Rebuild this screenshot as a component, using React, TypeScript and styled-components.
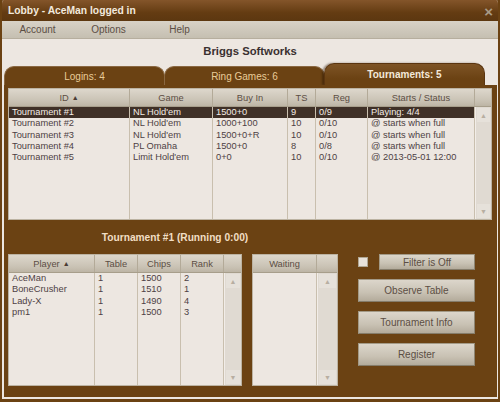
import React from 'react';
import styled, { createGlobalStyle } from 'styled-components';

const BROWN = '#6b4213';
const LIGHT = '#ede7e1';
const TEXT = '#4e3f44';
const HEAD_TEXT = '#5c4e44';

const GlobalStyle = createGlobalStyle`
    html, body {
        margin: 0;
        padding: 0;
        background: ${ BROWN };
    }
    * {
        box-sizing: border-box;
    }
`;

const Window = styled.div`
    width: 500px;
    height: 402px;
    display: flex;
    flex-direction: column;
    background: ${ LIGHT };
    border: solid ${ BROWN };
    border-width: 0 2px 3px 2px;
    border-radius: 4px 4px 0 0;
    font-family: 'Liberation Sans', Arial, sans-serif;
    overflow: hidden;
`;

const TitleBar = styled.div`
    height: 21px;
    margin: 0 -2px;
    padding: 0 8px;
    display: flex;
    align-items: center;
    justify-content: space-between;
    background: linear-gradient(#84552a, #643c12 60%, #5c3710);
    color: #f2e9dd;
    font-weight: bold;
    font-size: 10.3px;
`;

const Close = styled.span`
    color: #a99a86;
    font-size: 15px;
    font-weight: bold;
    line-height: 1;
    margin-right: -1px;
    margin-top: 1px;
`;

const MenuBar = styled.div`
    height: 18px;
    display: flex;
    align-items: center;
    background: linear-gradient(#d8d2c7, #c5bfb1);
    border-bottom: 1px solid #b6ae9e;
`;

const MenuItem = styled.div`
    width: 71px;
    text-align: center;
    font-size: 10px;
    color: ${ HEAD_TEXT };
`;

const Company = styled.div`
    height: 24px;
    display: flex;
    align-items: center;
    justify-content: center;
    font-weight: bold;
    font-size: 11.3px;
    color: #3a3030;
`;

const Body = styled.div`
    flex: 1;
    display: flex;
    flex-direction: column;
    padding: 0 1px 2px 2px;
`;

const TabRow = styled.div`
    height: 22px;
    display: flex;
    align-items: flex-end;
`;

const Tab = styled.div<{ $active?: boolean }>`
    width: 161px;
    height: ${ p => p.$active ? 22 : 19 }px;
    margin-right: -1px;
    display: flex;
    align-items: center;
    justify-content: center;
    border-radius: 10px 10px 0 0;
    border: 1px solid ${ p => p.$active ? '#5a3510' : '#8a6842' };
    border-bottom: none;
    background: ${ p => p.$active
        ? 'linear-gradient(#7e5426, #6b4213 70%)'
        : BROWN };
    box-shadow: ${ p => p.$active ? '-2px 0 2px rgba(40, 20, 0, 0.45)' : 'none' };
    color: ${ p => p.$active ? '#f4e9da' : '#e9cc98' };
    font-weight: ${ p => p.$active ? 'bold' : 'normal' };
    font-size: 10px;
    position: relative;
    z-index: ${ p => p.$active ? 2 : 1 };
`;

const Panel = styled.div`
    flex: 1;
    background: ${ BROWN };
    padding: 3px 5px 11px 4px;
    display: flex;
    flex-direction: column;
    position: relative;
    z-index: 3;
`;

const TableFrame = styled.div<{ $width?: number }>`
    height: 132px;
    width: ${ p => p.$width ? `${ p.$width }px` : 'auto' };
    display: flex;
    flex-direction: column;
    border: 1px solid #bcb3a2;
    background: ${ LIGHT };
    font-size: 9.3px;
`;

const HeadRow = styled.div`
    height: 18px;
    display: flex;
    background: linear-gradient(#ddd7cc, #c9c2b4 70%, #bdb5a5);
    border-bottom: 1px solid #a79e8b;
`;

const HeadCell = styled.div<{ $w?: number }>`
    width: ${ p => p.$w ? `${ p.$w }px` : 'auto' };
    flex: ${ p => p.$w ? 'none' : 1 };
    display: flex;
    align-items: center;
    justify-content: center;
    border-right: 1px solid #b3aa98;
    color: ${ HEAD_TEXT };
    white-space: nowrap;

    &:last-child {
        border-right: none;
    }
`;

const Arrow = styled.span`
    font-size: 7px;
    margin-left: 3px;
    color: #4a3c34;
`;

const BodyRow = styled.div`
    flex: 1;
    display: flex;
`;

const Column = styled.div<{ $w?: number }>`
    width: ${ p => p.$w ? `${ p.$w }px` : 'auto' };
    flex: ${ p => p.$w ? 'none' : 1 };
    border-right: 1px solid #c9bfae;
    overflow: hidden;
`;

const Cell = styled.div<{ $selected?: boolean }>`
    height: 11.3px;
    line-height: 11.3px;
    padding-left: 3px;
    white-space: nowrap;
    color: ${ p => p.$selected ? '#f4ede6' : TEXT };
    background: ${ p => p.$selected ? '#3f3027' : 'transparent' };
`;

const ScrollTrack = styled.div<{ $w: number }>`
    width: ${ p => p.$w }px;
    display: flex;
    flex-direction: column;
    justify-content: space-between;
    background: #e0dad2;
    border-left: 1px solid #f2ede8;
    padding: 1px;
`;

const ScrollButton = styled.div`
    height: 14px;
    display: flex;
    align-items: center;
    justify-content: center;
    background: #e6e1da;
    color: #b8aea1;
    font-size: 7px;
`;

const Caption = styled.div`
    height: 34px;
    width: 334px;
    display: flex;
    align-items: center;
    justify-content: center;
    color: #f1dec4;
    font-weight: bold;
    font-size: 10.2px;
`;

const LowerRow = styled.div`
    display: flex;
    align-items: flex-start;
    gap: 10px;
`;

const Controls = styled.div`
    width: 117px;
    margin-left: 10px;
    display: flex;
    flex-direction: column;
    gap: 9px;
`;

const FilterRow = styled.div`
    display: flex;
    align-items: center;
    justify-content: space-between;
`;

const CheckBox = styled.div`
    width: 10px;
    height: 10px;
    background: #e8e2da;
    border: 1px solid #b0a794;
`;

const Button = styled.div<{ $small?: boolean }>`
    width: ${ p => p.$small ? 96 : 117 }px;
    height: ${ p => p.$small ? 16 : 23 }px;
    display: flex;
    align-items: center;
    justify-content: center;
    background: linear-gradient(#dcd6cb, #c8c1b3 60%, #b3ab9b);
    border: 1px solid #a39a87;
    border-bottom-color: #857c6a;
    border-right-color: #8e8573;
    color: ${ HEAD_TEXT };
    font-size: 10px;
`;

type Col = { title: string; w?: number; sort?: boolean };

const DataTable = ({ cols, rows, scroll, width, selected }: {
    cols: Col[];
    rows: string[][];
    scroll: number;
    width?: number;
    selected?: number;
}) => (
    <TableFrame $width={ width }>
        <HeadRow>
            { cols.map((c, i) =>
                <HeadCell key={ i } $w={ c.w }>
                    { c.title }{ c.sort && <Arrow>▲</Arrow> }
                </HeadCell>
            )}
            <HeadCell $w={ scroll } />
        </HeadRow>
        <BodyRow>
            { cols.map((c, i) =>
                <Column key={ i } $w={ c.w }>
                    { rows.map((r, j) =>
                        <Cell key={ j } $selected={ j === selected }>{ r[i] }</Cell>
                    )}
                </Column>
            )}
            <ScrollTrack $w={ scroll }>
                <ScrollButton>▲</ScrollButton>
                <ScrollButton>▼</ScrollButton>
            </ScrollTrack>
        </BodyRow>
    </TableFrame>
);

const tournamentCols: Col[] = [
    { title: 'ID', w: 121, sort: true },
    { title: 'Game', w: 83 },
    { title: 'Buy In', w: 75 },
    { title: 'TS', w: 28 },
    { title: 'Reg', w: 52 },
    { title: 'Starts / Status' },
];

const tournaments = [
    ['Tournament #1', 'NL Hold\'em', '1500+0', '9', '0/9', 'Playing: 4/4'],
    ['Tournament #2', 'NL Hold\'em', '1000+100', '10', '0/10', '@ starts when full'],
    ['Tournament #3', 'NL Hold\'em', '1500+0+R', '10', '0/10', '@ starts when full'],
    ['Tournament #4', 'PL Omaha', '1500+0', '8', '0/8', '@ starts when full'],
    ['Tournament #5', 'Limit Hold\'em', '0+0', '10', '0/10', '@ 2013-05-01 12:00'],
];

const playerCols: Col[] = [
    { title: 'Player', w: 86, sort: true },
    { title: 'Table', w: 43 },
    { title: 'Chips', w: 43 },
    { title: 'Rank', w: 43 },
];

const players = [
    ['AceMan', '1', '1500', '2'],
    ['BoneCrusher', '1', '1510', '1'],
    ['Lady-X', '1', '1490', '4'],
    ['pm1', '1', '1500', '3'],
];

const App = () => {

    return (
        <Window>
            <GlobalStyle />
            <TitleBar>
                <span>Lobby - AceMan logged in</span>
                <Close>×</Close>
            </TitleBar>

            <MenuBar>
                <MenuItem>Account</MenuItem>
                <MenuItem>Options</MenuItem>
                <MenuItem>Help</MenuItem>
            </MenuBar>

            <Company>Briggs Softworks</Company>

            <Body>
                <TabRow>
                    <Tab>Logins: 4</Tab>
                    <Tab>Ring Games: 6</Tab>
                    <Tab $active>Tournaments: 5</Tab>
                </TabRow>

                <Panel>
                    <DataTable cols={ tournamentCols } rows={ tournaments } scroll={ 16 } selected={ 0 } />

                    <Caption>Tournament #1 (Running 0:00)</Caption>

                    <LowerRow>
                        <DataTable cols={ playerCols } rows={ players } scroll={ 17 } width={ 234 } />
                        <DataTable cols={ [{ title: 'Waiting', w: 64 }] } rows={ [] } scroll={ 20 } width={ 86 } />
                        <Controls>
                            <FilterRow>
                                <CheckBox />
                                <Button $small>Filter is Off</Button>
                            </FilterRow>
                            <Button>Observe Table</Button>
                            <Button>Tournament Info</Button>
                            <Button>Register</Button>
                        </Controls>
                    </LowerRow>
                </Panel>
            </Body>
        </Window>
    );
}

export default App;
